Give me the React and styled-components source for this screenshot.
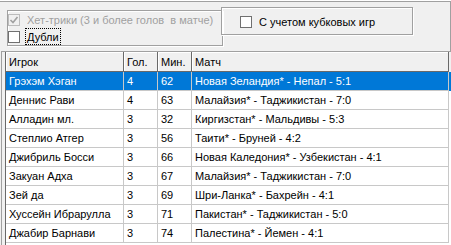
import styled, { createGlobalStyle } from "styled-components";

const GlobalStyle = createGlobalStyle`
  html, body {
    margin: 0;
    padding: 0;
    background: #f0f0f0;
  }
  body {
    font-family: "Liberation Sans", Arial, sans-serif;
    font-size: 11px;
    color: #000;
  }
`;

const columns = [
	{ title: "Игрок", width: 118 },
	{ title: "Гол.", width: 34 },
	{ title: "Мин.", width: 34 },
	{ title: "Матч", width: 257 },
];

const rows = [
	["Грэхэм Хэган", "4", "62", "Новая Зеландия* - Непал - 5:1"],
	["Деннис Рави", "4", "63", "Малайзия* - Таджикистан - 7:0"],
	["Алладин мл.", "3", "32", "Киргизстан* - Мальдивы - 5:3"],
	["Степлио Атгер", "3", "56", "Таити* - Бруней - 4:2"],
	["Джибриль Босси", "3", "66", "Новая Каледония* - Узбекистан - 4:1"],
	["Закуан Адха", "3", "67", "Малайзия* - Таджикистан - 7:0"],
	["Зей да", "3", "69", "Шри-Ланка* - Бахрейн - 4:1"],
	["Хуссейн Ибрарулла", "3", "71", "Пакистан* - Таджикистан - 5:0"],
	["Джабир Барнави", "3", "74", "Палестина* - Йемен - 4:1"],
];

const Checkbox = ({ checked, disabled }) => (
	<Box $disabled={disabled}>
		{checked && (
			<svg width="10" height="10" viewBox="0 0 10 10">
				<path
					d="M1.5 5 L4 7.5 L8.5 2"
					fill="none"
					stroke={disabled ? "#a0a0a0" : "#333"}
					strokeWidth="1.6"
				/>
			</svg>
		)}
	</Box>
);

const App = () => {
	return (
		<Window>
			<GlobalStyle />
			<TopPanel>
				<StatsGroup>
					<CheckRow>
						<Checkbox checked disabled />
						<Label $disabled>Хет-трики (3 и более голов&nbsp; в матче)</Label>
					</CheckRow>
					<CheckRow>
						<Checkbox />
						<Label $focused>Дубли</Label>
					</CheckRow>
				</StatsGroup>
				<CupGroup>
					<CheckRow>
						<Checkbox />
						<Label>С учетом кубковых игр</Label>
					</CheckRow>
				</CupGroup>
			</TopPanel>
			<TableFrame>
				<Grid>
					<HeaderRow>
						{columns.map((col) => (
							<HeaderCell key={col.title} $width={col.width}>
								{col.title}
							</HeaderCell>
						))}
					</HeaderRow>
					{rows.map((row, i) => (
						<Row key={row[0]} $selected={i === 0}>
							{row.map((value, j) => (
								<Cell key={j} $width={columns[j].width}>
									{value}
								</Cell>
							))}
						</Row>
					))}
				</Grid>
			</TableFrame>
		</Window>
	);
};

export default App;

const Window = styled.div`
	width: 451px;
	height: 245px;
	overflow: hidden;
	display: flex;
	flex-direction: column;
	background: #f0f0f0;
	border-top: 1px solid #fff;
	box-sizing: border-box;
`;

const TopPanel = styled.div`
	flex: none;
	height: 50px;
	box-sizing: border-box;
	display: flex;
	align-items: flex-start;
	border-top: 1px solid #a0a0a0;
	border-right: 1px solid #a0a0a0;
`;

const Etched = styled.div`
	box-sizing: border-box;
	border: 1px solid #a0a0a0;
	box-shadow: inset 1px 1px 0 #fff, 1px 1px 0 #fff;
	display: flex;
	flex-direction: column;
`;

const StatsGroup = styled(Etched)`
	width: 216px;
	height: 36px;
	margin: 8px 0 0 7px;
`;

const CupGroup = styled(Etched)`
	width: 192px;
	height: 28px;
	margin: 5px 0 0 -2px;
	padding: 1px 0 0 18px;
	justify-content: center;
`;

const CheckRow = styled.div`
	display: flex;
	align-items: center;
	height: 17px;
`;

const Box = styled.span`
	flex: none;
	width: 12px;
	height: 12px;
	box-sizing: border-box;
	display: flex;
	align-items: center;
	justify-content: center;
	border: 1px solid ${(props) => (props.$disabled ? "#bcbcbc" : "#707070")};
	background: ${(props) => (props.$disabled ? "#f0f0f0" : "#fff")};
`;

const Label = styled.span`
	margin-left: 5px;
	padding: 0 1px;
	height: 100%;
	box-sizing: border-box;
	display: flex;
	align-items: center;
	white-space: nowrap;
	border: 1px dotted ${(props) => (props.$focused ? "#000" : "transparent")};
	color: ${(props) => (props.$disabled ? "#a0a0a0" : "#000")};
`;

const TableFrame = styled.div`
	flex: 1;
	display: flex;
	margin-left: 1px;
	padding-left: 3px;
	border-top: 1px solid #a0a0a0;
	border-left: 1px solid #a0a0a0;
	background: #f0f0f0;
`;

const Grid = styled.div`
	flex: 1;
	background: #fff;
	border-left: 1px solid #696969;
`;

const HeaderRow = styled.div`
	display: flex;
	height: 20px;
	background: #f0f0f0;
`;

const HeaderCell = styled.div`
	flex: none;
	width: ${(props) => props.$width}px;
	box-sizing: border-box;
	padding: 1px 0 0 3px;
	line-height: 18px;
	border-right: 1px solid #696969;
	border-bottom: 1px solid #696969;
	box-shadow: inset 1px 1px 0 #fff;
	white-space: nowrap;
`;

const Row = styled.div`
	display: flex;
	height: 19px;
	background: ${(props) => (props.$selected ? "#0078d7" : "transparent")};
	color: ${(props) => (props.$selected ? "#fff" : "#000")};
`;

const Cell = styled.div`
	flex: none;
	width: ${(props) => props.$width}px;
	box-sizing: border-box;
	padding-left: 3px;
	line-height: 18px;
	border-right: 1px solid #c8c8c8;
	border-bottom: 1px solid #c8c8c8;
	white-space: nowrap;
	overflow: hidden;
`;
